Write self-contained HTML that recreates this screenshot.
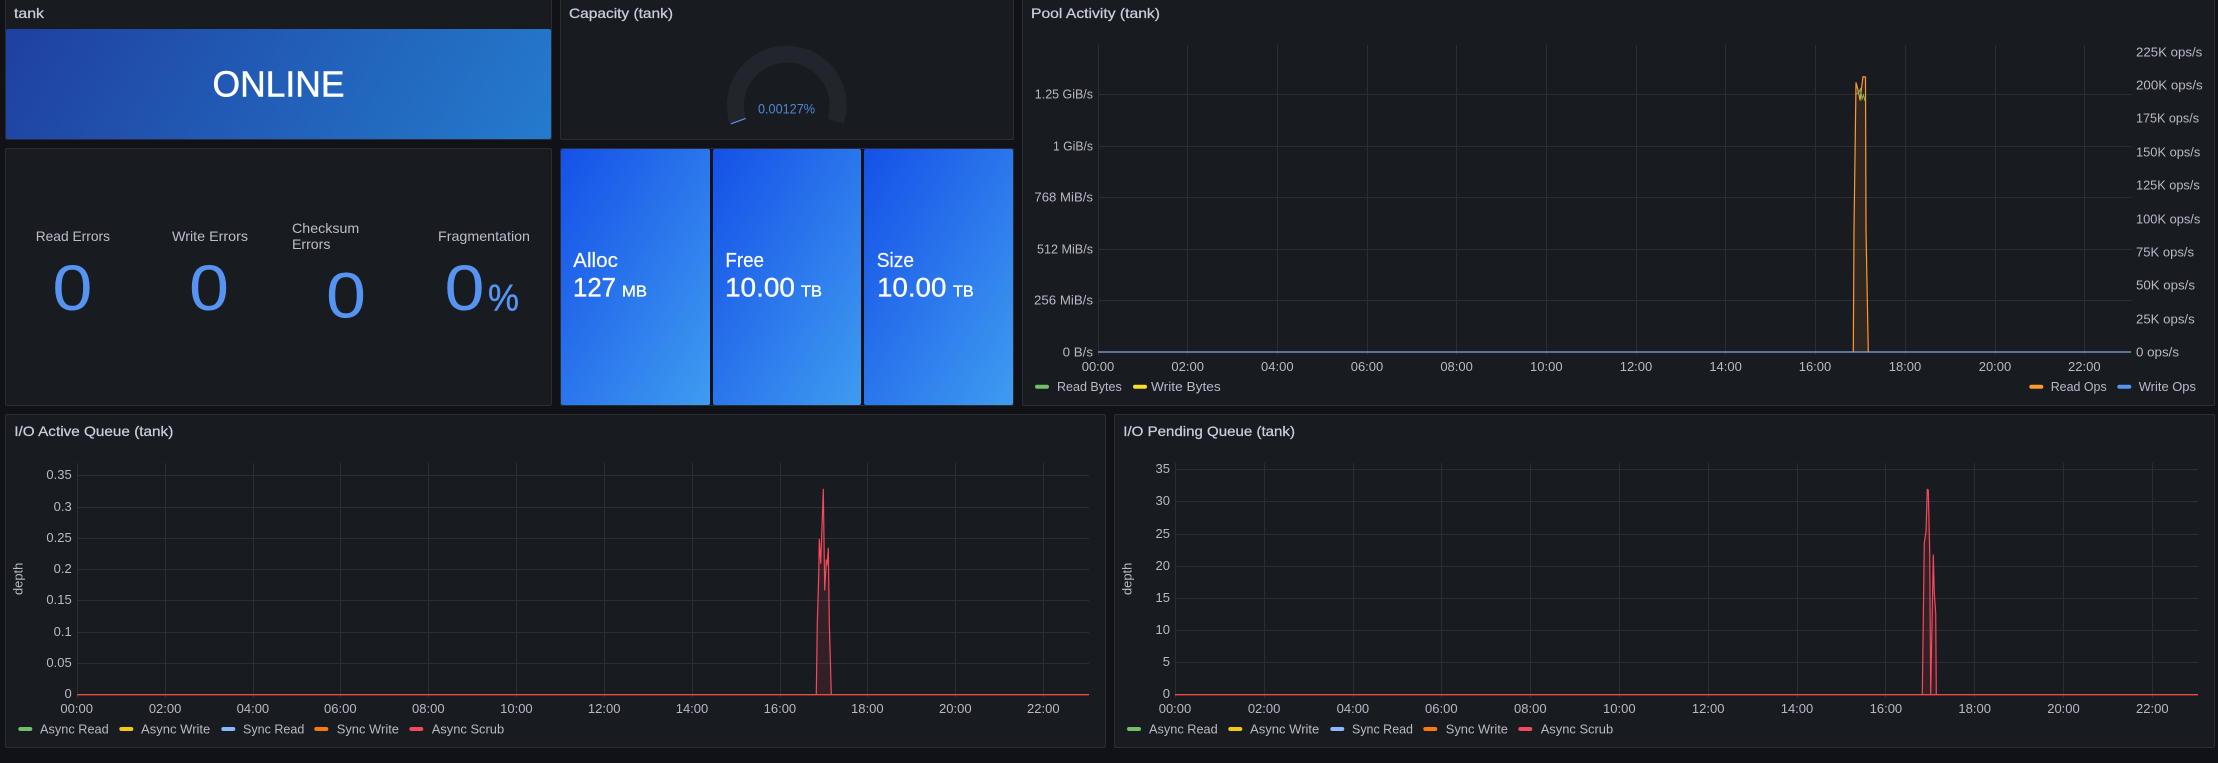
<!DOCTYPE html>
<html lang="en"><head><meta charset="utf-8"><title>tank</title>
<style>
html,body{margin:0;padding:0;background:#111217;width:2218px;height:763px;overflow:hidden}
.p{position:absolute;box-sizing:border-box;background:#181b1f;border:1px solid #2a2d33;border-radius:2px}
.b{position:absolute;border-radius:2px;background:linear-gradient(to bottom right,#1550e8,#3f9cf0)}
svg{position:absolute;left:0;top:0}
text{font-family:"Liberation Sans",sans-serif;font-size:13px;fill:#b9b9c6}
.t{font-size:14px;fill:#ccccdc;stroke:#ccccdc;stroke-width:.25px}
.s{font-size:14px;fill:#bdbdca}
.w{fill:#fff;stroke:#fff;stroke-width:.35px}
.n{font-size:64px;fill:#5794f2}
</style></head><body>
<div class="p" style="left:5px;top:-4px;width:547px;height:144px"></div>
<div style="position:absolute;left:6px;top:29px;width:545px;height:110px;border-radius:2px;background:linear-gradient(120deg,#1f40a0,#247bce)"></div>
<div class="p" style="left:5px;top:148px;width:547px;height:258px"></div>
<div class="p" style="left:560px;top:-4px;width:454px;height:144px"></div>
<div class="p" style="left:560px;top:148px;width:454px;height:258px;background:#111217"></div>
<div class="b" style="left:561px;top:149px;width:149px;height:256px"></div>
<div class="b" style="left:713px;top:149px;width:148px;height:256px"></div>
<div class="b" style="left:864px;top:149px;width:149px;height:256px"></div>
<div class="p" style="left:1022px;top:-4px;width:1193px;height:410px"></div>
<div class="p" style="left:5px;top:414px;width:1101px;height:334px"></div>
<div class="p" style="left:1114px;top:414px;width:1101px;height:334px"></div>

<svg width="2218" height="763" viewBox="0 0 2218 763" xmlns="http://www.w3.org/2000/svg">
<!-- Titles -->
<text class="t" x="14" y="18" textLength="30" lengthAdjust="spacingAndGlyphs">tank</text>
<text class="t" x="569" y="18" textLength="104" lengthAdjust="spacingAndGlyphs">Capacity (tank)</text>
<text class="t" x="1031" y="18" textLength="129" lengthAdjust="spacingAndGlyphs">Pool Activity (tank)</text>
<text class="t" x="14.3" y="436" textLength="159" lengthAdjust="spacingAndGlyphs">I/O Active Queue (tank)</text>
<text class="t" x="1123.3" y="436" textLength="171.7" lengthAdjust="spacingAndGlyphs">I/O Pending Queue (tank)</text>

<!-- ONLINE -->
<text x="212.5" y="96.7" textLength="132" lengthAdjust="spacingAndGlyphs" style="font-size:36px;fill:#fff;stroke:#fff;stroke-width:.5px">ONLINE</text>

<!-- Stats -->
<text class="s" x="35.7" y="241" textLength="74.3" lengthAdjust="spacingAndGlyphs">Read Errors</text>
<text class="s" x="172" y="241" textLength="76" lengthAdjust="spacingAndGlyphs">Write Errors</text>
<text class="s" x="292" y="233" textLength="67.3" lengthAdjust="spacingAndGlyphs">Checksum</text>
<text class="s" x="292" y="249" textLength="38.4" lengthAdjust="spacingAndGlyphs">Errors</text>
<text class="s" x="438" y="241" textLength="92" lengthAdjust="spacingAndGlyphs">Fragmentation</text>
<text class="n" x="52.4" y="310" textLength="40" lengthAdjust="spacingAndGlyphs">0</text>
<text class="n" x="189" y="310" textLength="40" lengthAdjust="spacingAndGlyphs">0</text>
<text class="n" x="326" y="317.5" textLength="40" lengthAdjust="spacingAndGlyphs">0</text>
<text class="n" x="444.5" y="310" textLength="40" lengthAdjust="spacingAndGlyphs">0</text>
<text x="488" y="310.5" textLength="31" lengthAdjust="spacingAndGlyphs" style="font-size:37px;fill:#5794f2;stroke:#5794f2;stroke-width:.4px">%</text>

<!-- Gauge -->
<path d="M737.9 121.4A51.4 51.4 0 1 1 835.7 121.4" fill="none" stroke="#22252b" stroke-width="17"/>
<path d="M731 123.8L745.7 118.4" fill="none" stroke="#5794f2" stroke-width="1.2"/>
<text x="758" y="113.5" textLength="57" lengthAdjust="spacingAndGlyphs" style="font-size:14px;fill:#4f86d8">0.00127%</text>

<!-- Blue stats -->
<text class="w" x="573.2" y="267" textLength="44.7" lengthAdjust="spacingAndGlyphs" style="font-size:20px;stroke-width:.15px">Alloc</text>
<text class="w" x="573" y="296.7" textLength="43" lengthAdjust="spacingAndGlyphs" style="font-size:27px">127</text>
<text class="w" x="622" y="296.7" textLength="25" lengthAdjust="spacingAndGlyphs" style="font-size:16px">MB</text>
<text class="w" x="725.4" y="267" textLength="38.6" lengthAdjust="spacingAndGlyphs" style="font-size:20px;stroke-width:.15px">Free</text>
<text class="w" x="725" y="296.7" textLength="70" lengthAdjust="spacingAndGlyphs" style="font-size:27px">10.00</text>
<text class="w" x="801" y="296.7" textLength="21" lengthAdjust="spacingAndGlyphs" style="font-size:16px">TB</text>
<text class="w" x="876.8" y="267" textLength="37.2" lengthAdjust="spacingAndGlyphs" style="font-size:20px;stroke-width:.15px">Size</text>
<text class="w" x="877" y="296.7" textLength="69.4" lengthAdjust="spacingAndGlyphs" style="font-size:27px">10.00</text>
<text class="w" x="953" y="296.7" textLength="20.6" lengthAdjust="spacingAndGlyphs" style="font-size:16px">TB</text>

<!-- Pool grid -->
<path d="M1098 94.5H2132M1098 146.5H2132M1098 197.5H2132M1098 249.5H2132M1098 300.5H2132M1098.5 45V355M1187.5 45V355M1277.5 45V355M1367.5 45V355M1456.5 45V355M1546.5 45V355M1636.5 45V355M1725.5 45V355M1815.5 45V355M1905.5 45V355M1995.5 45V355M2084.5 45V355" fill="none" stroke="#2b2e33" stroke-width="1"/>
<path d="M1853.3 352L1856 82.7L1860 100L1863 76.7L1865.5 77L1868.3 352Z" fill="rgba(255,152,48,.1)"/>
<path d="M1853.3 352L1854 230L1856 82.7L1858 90L1860 100L1863 76.7L1865.5 77L1866 230L1868.3 352" fill="none" stroke="#ff9830" stroke-width="1.2" stroke-linejoin="round"/>
<path d="M1856.5 94L1859 92L1860.5 89L1862 99L1863.5 95L1865 101" fill="none" stroke="#73bf69" stroke-width="1"/>
<path d="M1098 352H2131" fill="none" stroke="#7ea9e6" stroke-width="1.3"/>
<g>
<text x="1034.8" y="98.4" textLength="58.2" lengthAdjust="spacingAndGlyphs">1.25 GiB/s</text>
<text x="1053" y="150.4" textLength="40" lengthAdjust="spacingAndGlyphs">1 GiB/s</text>
<text x="1034.4" y="201.4" textLength="58.6" lengthAdjust="spacingAndGlyphs">768 MiB/s</text>
<text x="1037" y="253.4" textLength="56" lengthAdjust="spacingAndGlyphs">512 MiB/s</text>
<text x="1034" y="304.4" textLength="59" lengthAdjust="spacingAndGlyphs">256 MiB/s</text>
<text x="1062.6" y="356.4" textLength="30.4" lengthAdjust="spacingAndGlyphs">0 B/s</text>
<text x="2136" y="56.4" textLength="66.3" lengthAdjust="spacingAndGlyphs">225K ops/s</text>
<text x="2136" y="89.4" textLength="66.7" lengthAdjust="spacingAndGlyphs">200K ops/s</text>
<text x="2136" y="122.4" textLength="63" lengthAdjust="spacingAndGlyphs">175K ops/s</text>
<text x="2136" y="156.4" textLength="64.3" lengthAdjust="spacingAndGlyphs">150K ops/s</text>
<text x="2136" y="189.4" textLength="63.7" lengthAdjust="spacingAndGlyphs">125K ops/s</text>
<text x="2136" y="223.4" textLength="64.3" lengthAdjust="spacingAndGlyphs">100K ops/s</text>
<text x="2136" y="256.4" textLength="58" lengthAdjust="spacingAndGlyphs">75K ops/s</text>
<text x="2136" y="289.4" textLength="59" lengthAdjust="spacingAndGlyphs">50K ops/s</text>
<text x="2136" y="323.4" textLength="58.7" lengthAdjust="spacingAndGlyphs">25K ops/s</text>
<text x="2136" y="356.4" textLength="43" lengthAdjust="spacingAndGlyphs">0 ops/s</text>
</g>
<g text-anchor="middle">
<text x="1098" y="371">00:00</text><text x="1187.7" y="371">02:00</text><text x="1277.3" y="371">04:00</text><text x="1367" y="371">06:00</text><text x="1456.6" y="371">08:00</text><text x="1546.3" y="371">10:00</text><text x="1636" y="371">12:00</text><text x="1725.6" y="371">14:00</text><text x="1815" y="371">16:00</text><text x="1905" y="371">18:00</text><text x="1995" y="371">20:00</text><text x="2084.3" y="371">22:00</text>
</g>
<rect x="1035" y="384.7" width="14" height="4" rx="2" fill="#73bf69"/>
<text x="1057" y="391" textLength="64.7" lengthAdjust="spacingAndGlyphs">Read Bytes</text>
<rect x="1133" y="384.7" width="14" height="4" rx="2" fill="#fade2a"/>
<text x="1151" y="391" textLength="69.7" lengthAdjust="spacingAndGlyphs">Write Bytes</text>
<rect x="2029.3" y="384.7" width="14" height="4" rx="2" fill="#ff9830"/>
<text x="2050.7" y="391" textLength="56" lengthAdjust="spacingAndGlyphs">Read Ops</text>
<rect x="2117.3" y="384.7" width="14" height="4" rx="2" fill="#5794f2"/>
<text x="2138.7" y="391" textLength="57.3" lengthAdjust="spacingAndGlyphs">Write Ops</text>

<!-- Active queue chart -->
<path d="M77 475.5H1089M77 507.5H1089M77 538.5H1089M77 569.5H1089M77 600.5H1089M77 632.5H1089M77 663.5H1089M77.5 463V698M165.5 463V698M253.5 463V698M340.5 463V698M428.5 463V698M516.5 463V698M604.5 463V698M692.5 463V698M780.5 463V698M867.5 463V698M955.5 463V698M1043.5 463V698" fill="none" stroke="#2b2e33" stroke-width="1"/>
<path d="M816.3 694.7L817.3 623L818.7 576.7L819.3 539.3L820.7 563.3L823.3 489.3L824.7 590L826.3 560L827 565L828.3 548.3L829.3 623L831.3 694.7Z" fill="rgba(242,73,92,.12)"/>
<path d="M816.3 694.7L817.3 623L818.7 576.7L819.3 539.3L820.7 563.3L823.3 489.3L824.7 590L826.3 560L827 565L828.3 548.3L829.3 623L831.3 694.7" fill="none" stroke="#f2495c" stroke-width="1.2" stroke-linejoin="round"/>
<path d="M77 694.7H1089" fill="none" stroke="#f04848" stroke-width="1.3"/>
<g text-anchor="end">
<text x="71.7" y="479.2">0.35</text><text x="71.7" y="511">0.3</text><text x="71.7" y="542">0.25</text><text x="71.7" y="573">0.2</text><text x="71.7" y="604">0.15</text><text x="71.7" y="636">0.1</text><text x="71.7" y="667">0.05</text><text x="71.7" y="698">0</text>
</g>
<text transform="translate(22.5 595) rotate(-90)" textLength="32.3" lengthAdjust="spacingAndGlyphs">depth</text>
<g text-anchor="middle">
<text x="76.7" y="713">00:00</text><text x="165.1" y="713">02:00</text><text x="252.9" y="713">04:00</text><text x="340.3" y="713">06:00</text><text x="428.3" y="713">08:00</text><text x="516.4" y="713">10:00</text><text x="604.2" y="713">12:00</text><text x="692" y="713">14:00</text><text x="779.9" y="713">16:00</text><text x="867.3" y="713">18:00</text><text x="955.3" y="713">20:00</text><text x="1043.3" y="713">22:00</text>
</g>
<rect x="18.3" y="727" width="14" height="4" rx="2" fill="#73bf69"/>
<text x="40" y="733.5" textLength="68.7" lengthAdjust="spacingAndGlyphs">Async Read</text>
<rect x="119.3" y="727" width="14" height="4" rx="2" fill="#f2cc0c"/>
<text x="141" y="733.5" textLength="69.3" lengthAdjust="spacingAndGlyphs">Async Write</text>
<rect x="221.3" y="727" width="14" height="4" rx="2" fill="#8ab8ff"/>
<text x="243" y="733.5" textLength="61.3" lengthAdjust="spacingAndGlyphs">Sync Read</text>
<rect x="314.3" y="727" width="14" height="4" rx="2" fill="#ff780a"/>
<text x="336.7" y="733.5" textLength="62.3" lengthAdjust="spacingAndGlyphs">Sync Write</text>
<rect x="409.3" y="727" width="14" height="4" rx="2" fill="#f2495c"/>
<text x="431.7" y="733.5" textLength="72.5" lengthAdjust="spacingAndGlyphs">Async Scrub</text>

<!-- Pending queue chart -->
<path d="M1175 469.5H2198M1175 501.5H2198M1175 534.5H2198M1175 566.5H2198M1175 598.5H2198M1175 630.5H2198M1175 662.5H2198M1175.5 463V698M1264.5 463V698M1353.5 463V698M1441.5 463V698M1530.5 463V698M1619.5 463V698M1708.5 463V698M1797.5 463V698M1885.5 463V698M1974.5 463V698M2063.5 463V698M2152.5 463V698" fill="none" stroke="#2b2e33" stroke-width="1"/>
<path d="M1922.3 694.7L1923.3 618.3L1924.3 542.7L1926 531.7L1927.3 489.3L1928.3 490L1929.7 553L1930.7 694.7L1933.3 555L1934.3 593L1935.7 613L1936.3 694.7Z" fill="rgba(242,73,92,.12)"/>
<path d="M1922.3 694.7L1923.3 618.3L1924.3 542.7L1926 531.7L1927.3 489.3L1928.3 490L1929.7 553L1930.7 694.7L1933.3 555L1934.3 593L1935.7 613L1936.3 694.7" fill="none" stroke="#f2495c" stroke-width="1.2" stroke-linejoin="round"/>
<path d="M1175 694.7H2198" fill="none" stroke="#f04848" stroke-width="1.3"/>
<g text-anchor="end">
<text x="1170" y="473">35</text><text x="1170" y="505">30</text><text x="1170" y="538">25</text><text x="1170" y="570">20</text><text x="1170" y="602">15</text><text x="1170" y="634">10</text><text x="1170" y="666">5</text><text x="1170" y="698">0</text>
</g>
<text transform="translate(1131.5 595) rotate(-90)" textLength="32.3" lengthAdjust="spacingAndGlyphs">depth</text>
<g text-anchor="middle">
<text x="1175" y="713">00:00</text><text x="1264.1" y="713">02:00</text><text x="1352.9" y="713">04:00</text><text x="1441.3" y="713">06:00</text><text x="1530.3" y="713">08:00</text><text x="1619.3" y="713">10:00</text><text x="1708.2" y="713">12:00</text><text x="1797" y="713">14:00</text><text x="1885.9" y="713">16:00</text><text x="1974.7" y="713">18:00</text><text x="2063.5" y="713">20:00</text><text x="2152.3" y="713">22:00</text>
</g>
<rect x="1127" y="727" width="14" height="4" rx="2" fill="#73bf69"/>
<text x="1149" y="733.5" textLength="68.7" lengthAdjust="spacingAndGlyphs">Async Read</text>
<rect x="1228.3" y="727" width="14" height="4" rx="2" fill="#f2cc0c"/>
<text x="1250" y="733.5" textLength="69.3" lengthAdjust="spacingAndGlyphs">Async Write</text>
<rect x="1330.3" y="727" width="14" height="4" rx="2" fill="#8ab8ff"/>
<text x="1352" y="733.5" textLength="61" lengthAdjust="spacingAndGlyphs">Sync Read</text>
<rect x="1423.3" y="727" width="14" height="4" rx="2" fill="#ff780a"/>
<text x="1445.7" y="733.5" textLength="62.3" lengthAdjust="spacingAndGlyphs">Sync Write</text>
<rect x="1518.3" y="727" width="14" height="4" rx="2" fill="#f2495c"/>
<text x="1540.7" y="733.5" textLength="72.5" lengthAdjust="spacingAndGlyphs">Async Scrub</text>
</svg>
</body></html>
